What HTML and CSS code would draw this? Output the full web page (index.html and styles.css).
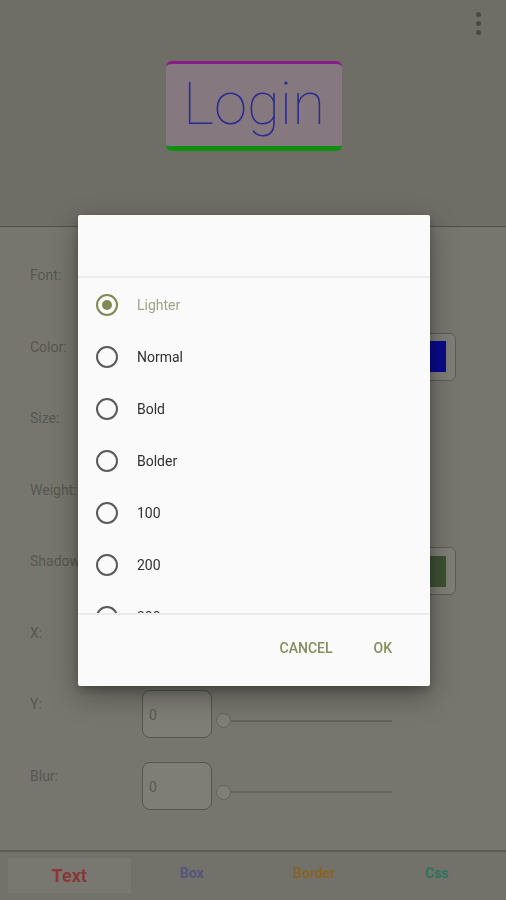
FILE: index.html
```html
<!DOCTYPE html>
<html lang="en">
<head>
<meta charset="utf-8">
<title>Style editor</title>
<link rel="stylesheet" href="styles.css">
</head>
<body>
<div class="app">
  <header class="preview">
    <div class="menu"><span></span><span></span><span></span></div>
    <div class="login-btn">Login</div>
  </header>

  <main class="form">
    <div class="row"><span class="label">Font:</span></div>
    <div class="row"><span class="label">Color:</span><div class="swatch"><span class="fill blue"></span></div></div>
    <div class="row"><span class="label">Size:</span></div>
    <div class="row"><span class="label">Weight:</span></div>
    <div class="row"><span class="label">Shadow:</span><div class="swatch"><span class="fill green"></span></div></div>
    <div class="row"><span class="label">X:</span></div>
    <div class="row"><span class="label">Y:</span><div class="num">0</div><div class="slider"><span class="thumb"></span><span class="track"></span></div></div>
    <div class="row"><span class="label">Blur:</span><div class="num">0</div><div class="slider"><span class="thumb"></span><span class="track"></span></div></div>
  </main>

  <nav class="tabs">
    <div class="tab tab-text active">Text</div>
    <div class="tab tab-box">Box</div>
    <div class="tab tab-border">Border</div>
    <div class="tab tab-css">Css</div>
  </nav>
</div>

<div class="overlay">
  <div class="dialog">
    <div class="dialog-title"></div>
    <div class="dialog-list">
      <div class="option checked"><span class="radio"></span><span class="opt-text">Lighter</span></div>
      <div class="option"><span class="radio"></span><span class="opt-text">Normal</span></div>
      <div class="option"><span class="radio"></span><span class="opt-text">Bold</span></div>
      <div class="option"><span class="radio"></span><span class="opt-text">Bolder</span></div>
      <div class="option"><span class="radio"></span><span class="opt-text">100</span></div>
      <div class="option"><span class="radio"></span><span class="opt-text">200</span></div>
      <div class="option"><span class="radio"></span><span class="opt-text">300</span></div>
    </div>
    <div class="dialog-actions">
      <span class="action">CANCEL</span>
      <span class="action">OK</span>
    </div>
  </div>
</div>
</body>
</html>
```
FILE: styles.css
```css
* { box-sizing: border-box; }
html, body { margin: 0; padding: 0; }
body {
  font-family: Roboto, "Noto Sans", sans-serif;
  width: 506px;
  height: 900px;
  overflow: hidden;
  background: #77766e;
}
.app {
  display: flex;
  flex-direction: column;
  height: 900px;
}
.preview {
  position: relative;
  height: 227px;
  flex-shrink: 0;
  background: #6e6e66;
  border-bottom: 1px solid #50504a;
  display: flex;
  justify-content: center;
  align-items: flex-start;
  padding-top: 61px;
  padding-left: 2px;
}
.menu {
  position: absolute;
  right: 25px;
  top: 12px;
  display: flex;
  flex-direction: column;
  gap: 4px;
}
.menu span {
  width: 5px;
  height: 5px;
  border-radius: 50%;
  background: #4a4a43;
}
.login-btn {
  width: 176px;
  height: 90px;
  background: #85787f;
  border-top: 3px solid #8c1a8c;
  border-bottom: 5px solid #0e8f10;
  border-radius: 6px;
  color: #2b2b95;
  font-weight: 100;
  font-size: 60px;
  line-height: 80px;
  text-align: center;
}
.form {
  flex: 1;
  padding: 34px 0 0 0;
  display: flex;
  flex-direction: column;
  gap: 23.5px;
}
.row {
  height: 48px;
  flex-shrink: 0;
  display: flex;
  align-items: flex-start;
  position: relative;
}
.label {
  width: 142px;
  padding-left: 30px;
  padding-top: 6px;
  font-size: 14px;
  color: #56564e;
}
.num {
  width: 70px;
  height: 48px;
  border: 1.5px solid #56564e;
  border-radius: 8px;
  background: #7e7d76;
  color: #5b5b53;
  font-size: 14px;
  padding: 16px 0 0 6px;
}
.slider {
  display: flex;
  align-items: center;
  margin-top: 23px;
  margin-left: 4px;
}
.thumb {
  width: 15px;
  height: 15px;
  border-radius: 50%;
  border: 1.5px solid #64635c;
  background: #7f7e77;
}
.track {
  width: 161px;
  height: 2px;
  background: #66655d;
}
.swatch {
  margin-left: auto;
  margin-right: 50px;
  width: 80px;
  height: 48px;
  border: 1.5px solid #5c5b54;
  border-radius: 6px;
  background: #7e7d76;
  display: flex;
  justify-content: flex-end;
  align-items: center;
  padding-right: 9px;
}
.fill {
  width: 60px;
  height: 31px;
}
.fill.blue { background: #0a0a8c; }
.fill.green { background: #3d5132; }

.tabs {
  height: 50px;
  flex-shrink: 0;
  border-top: 2px solid #5a5a51;
  background: #72716a;
  display: grid;
  grid-template-columns: repeat(4, 1fr);
  padding: 6px 8px 7px;
}
.tab {
  display: flex;
  align-items: center;
  justify-content: center;
  font-size: 14px;
  font-weight: 700;
  padding-bottom: 6px;
}
.tab.active {
  background: #797870;
  padding-bottom: 0;
}
.tab-text { color: #883838; font-size: 18px; font-weight: 700; }
.tab-box { color: #55557f; }
.tab-border { color: #86652a; }
.tab-css { color: #2d735f; }

.overlay {
  position: fixed;
  inset: 0;
  display: flex;
  justify-content: center;
  align-items: center;
}
.dialog {
  width: 352px;
  height: 471px;
  background: #fafafa;
  border-radius: 2px;
  box-shadow: 0 10px 28px rgba(0,0,0,0.35), 0 4px 8px rgba(0,0,0,0.2);
  display: flex;
  flex-direction: column;
  margin-left: 2px;
}
.dialog-title {
  height: 63px;
  flex-shrink: 0;
  border-bottom: 2px solid #ececec;
}
.dialog-list {
  height: 337px;
  flex-shrink: 0;
  overflow: hidden;
  padding-top: 1px;
  border-bottom: 2px solid #ececec;
}
.option {
  height: 52px;
  display: flex;
  align-items: center;
  padding-left: 18px;
}
.radio {
  width: 22px;
  height: 22px;
  border-radius: 50%;
  border: 2px solid #5a5a5a;
  display: flex;
  align-items: center;
  justify-content: center;
}
.opt-text {
  margin-left: 19px;
  font-size: 14px;
  color: #303030;
}
.option.checked .radio { border-color: #7f8a55; }
.option.checked .radio::after {
  content: "";
  width: 10px;
  height: 10px;
  border-radius: 50%;
  background: #7f8a55;
}
.option.checked .opt-text { color: #9ea487; }
.dialog-actions {
  flex: 1;
  display: flex;
  justify-content: flex-end;
  align-items: center;
  padding-right: 22px;
  padding-bottom: 4px;
  gap: 9px;
}
.action {
  padding: 0 16px;
  font-size: 14px;
  font-weight: 500;
  color: #858e5c;
}
```
